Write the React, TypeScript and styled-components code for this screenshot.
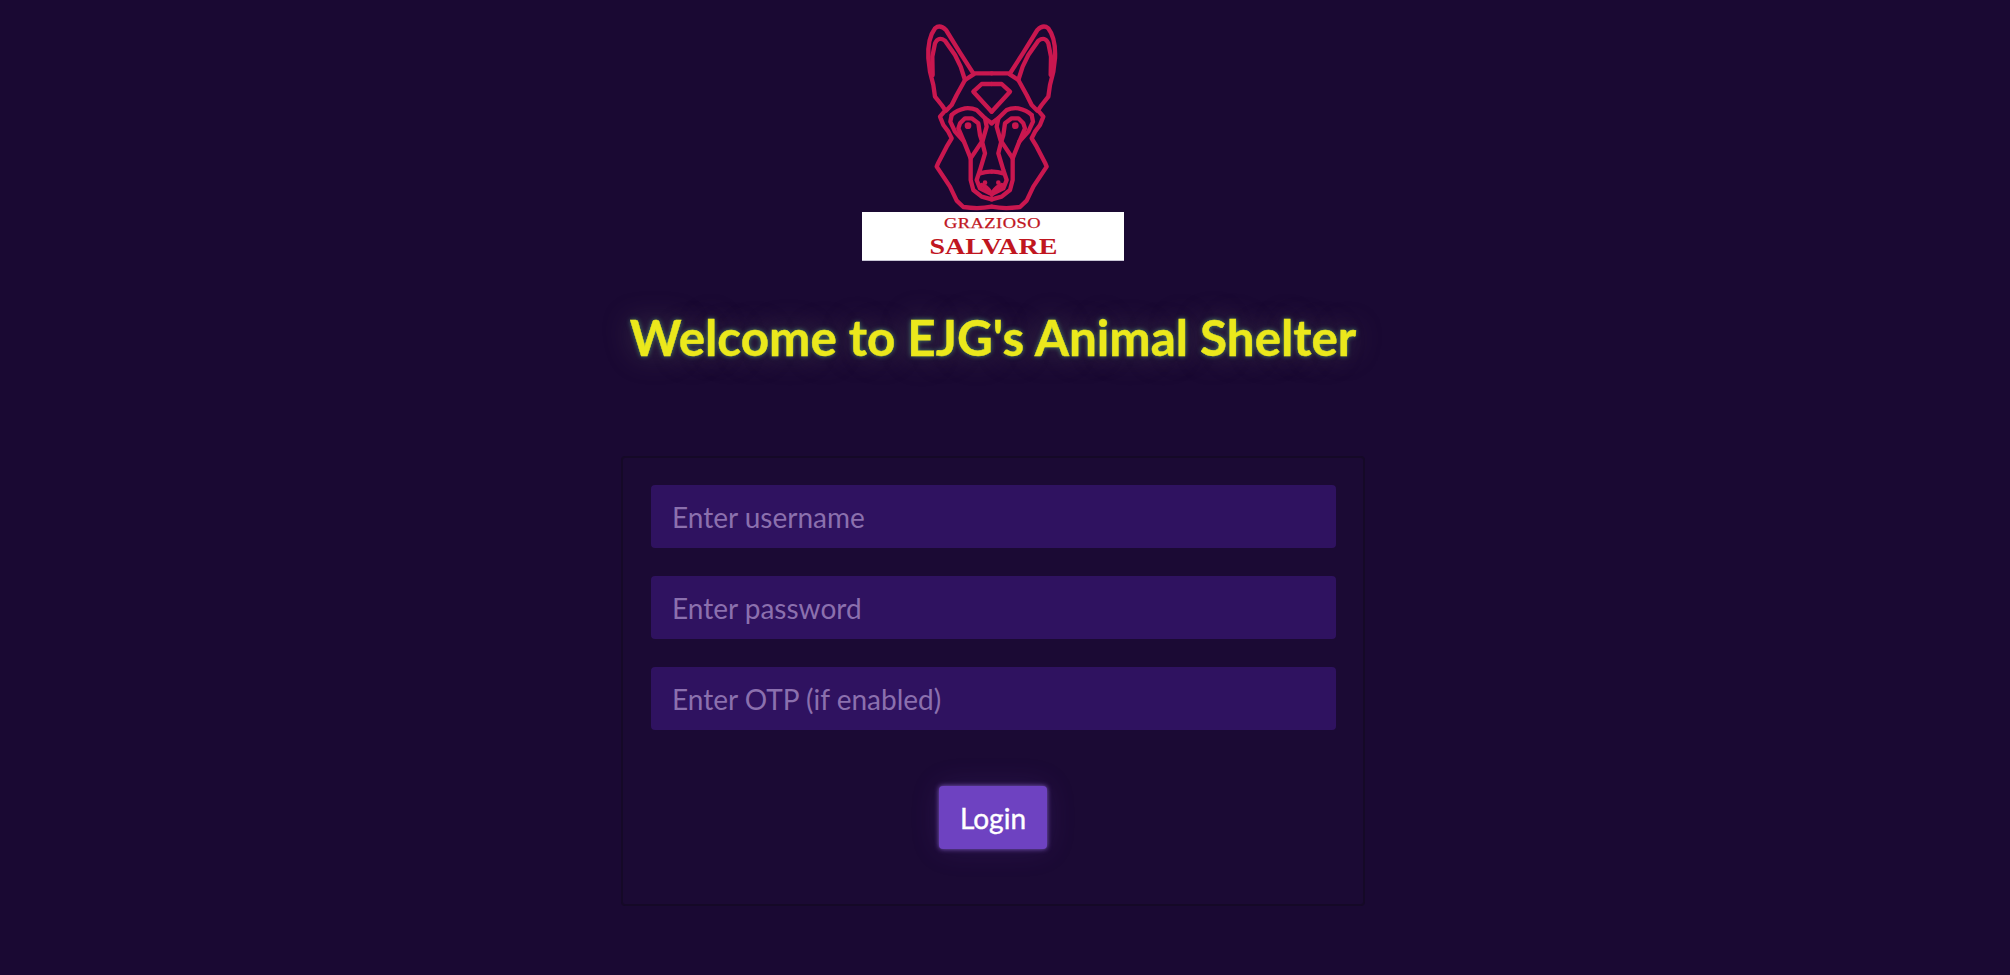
import React from "react";
import styled, { createGlobalStyle } from "styled-components";

const GlobalStyle = createGlobalStyle`
  html, body {
    margin: 0;
    padding: 0;
    background-color: #1a0933;
  }
  * {
    box-sizing: border-box;
  }
`;

const Page = styled.div`
  width: 1986px;
  height: 975px;
  overflow: hidden;
  padding-top: 10px;
  display: flex;
  flex-direction: column;
  align-items: center;
  font-family: Lato, "Open Sans", sans-serif;
`;

const LogoBox = styled.div`
  width: 262px;
  display: flex;
  flex-direction: column;
`;

const DogMark = styled.svg`
  display: block;
  width: 262px;
  height: 202px;
`;

const LogoPlate = styled.div`
  height: 49px;
  background-color: #ffffff;
  border-bottom: 1px solid #c9c6d6;
  display: flex;
  flex-direction: column;
  align-items: center;
  font-family: "Liberation Serif", serif;
  color: #c0161f;
  line-height: 1;
`;

const PlateTop = styled.span`
  font-size: 15px;
  letter-spacing: 0.4px;
  -webkit-text-stroke: 0.25px #c0161f;
  transform: scaleX(1.23);
  margin-top: 4px;
`;

const PlateBottom = styled.span`
  font-size: 23px;
  font-weight: 700;
  transform: scaleX(1.22);
  margin-top: 4px;
`;

const Heading = styled.h1`
  margin: 42px 0 0;
  font-size: 49.4px;
  line-height: 68px;
  font-weight: 700;
  color: #ebe81c;
  -webkit-text-stroke: 0.4px #ebe81c;
  text-shadow: 0 0 5px rgba(90, 190, 130, 0.7), 0 0 30px rgba(130, 130, 110, 0.45);
`;

const Card = styled.form`
  margin-top: 85px;
  width: 744px;
  height: 450px;
  padding: 27px 27px 0 28px;
  background-color: #1b0a34;
  border: 2px solid #150927;
  border-radius: 4px;
  display: flex;
  flex-direction: column;
  gap: 28px;
`;

const Field = styled.input`
  display: block;
  width: 100%;
  height: 63px;
  padding: 0 21px;
  border: none;
  border-radius: 4px;
  background-color: #2f1260;
  font-family: inherit;
  font-size: 28px;
  color: #ffffff;
  outline: none;

  &::placeholder {
    color: #8b70ae;
    opacity: 1;
  }
`;

const LoginButton = styled.button`
  align-self: center;
  margin: 28px 1px 0 0;
  width: 108px;
  height: 63px;
  border: none;
  border-radius: 4px;
  background-color: #6e42c1;
  color: #ffffff;
  -webkit-text-stroke: 0.4px #ffffff;
  font-family: inherit;
  font-size: 28px;
  box-shadow: 0 0 5px rgba(165, 120, 245, 0.75), 0 0 30px rgba(110, 66, 193, 0.16);
`;

// left half of the dog's head, the right half is the same paths mirrored
const DogHalf = () => (
  <>
    <path d="M400 190 L360 128 L318 60 Q300 42 285 55 Q262 85 265 145 L270 185 L280 225 L285 260 L305 285 L316 301 L300 320 L310 345 L325 365 L335 385 L320 410 L295 458 L290 470 L330 530 L350 572 L370 591 Q415 598 455 590" />
    <path d="M278 195 L277 140 L285 100 Q295 78 315 92 L345 135 L362 170 L375 210" />
    <path d="M455 190 L405 190 L375 210 L350 255 L335 285 L318 302" />
    <path d="M455 222 L425 222 L400 245 L455 305" />
    <path d="M335 315 Q350 300 375 295 Q395 293 410 300 L435 325 L455 340" />
    <path d="M435 325 L440 350 L428 392" />
    <path d="M372 395 L355 355 L360 340 L375 325 L395 325 L415 340 L420 375 L426 394 L392 445" />
    <circle cx="384" cy="347" r="10" fill="#c9174f" stroke="none" />
    <path d="M335 315 L331 335 L345 365 L372 395 L392 445 L392 510 L400 540 L425 560 L455 568" />
    <path d="M426 394 L435 430 L420 480 L410 510 L420 535 L450 550" />
    <path d="M420 490 Q440 484 455 485" />
    <circle cx="435" cy="518" r="7" fill="#c9174f" stroke="none" />
    <circle cx="455" cy="556" r="5" fill="#c9174f" stroke="none" />
    <path d="M425 525 Q440 530 450 545" />
  </>
);

const DogLines = () => (
  <DogMark viewBox="66 0 786 606" fill="none" stroke="#c9174f" strokeWidth="13" strokeLinejoin="round" strokeLinecap="round">
    <DogHalf />
    <g transform="matrix(-1 0 0 1 910 0)">
      <DogHalf />
    </g>
  </DogMark>
);

const App = () => {
  return (
    <Page>
      <GlobalStyle />
      <LogoBox>
        <DogLines />
        <LogoPlate>
          <PlateTop>GRAZIOSO</PlateTop>
          <PlateBottom>SALVARE</PlateBottom>
        </LogoPlate>
      </LogoBox>
      <Heading>Welcome to EJG's Animal Shelter</Heading>
      <Card>
        <Field placeholder="Enter username" />
        <Field placeholder="Enter password" />
        <Field placeholder="Enter OTP (if enabled)" />
        <LoginButton type="button">Login</LoginButton>
      </Card>
    </Page>
  );
};

export default App;
